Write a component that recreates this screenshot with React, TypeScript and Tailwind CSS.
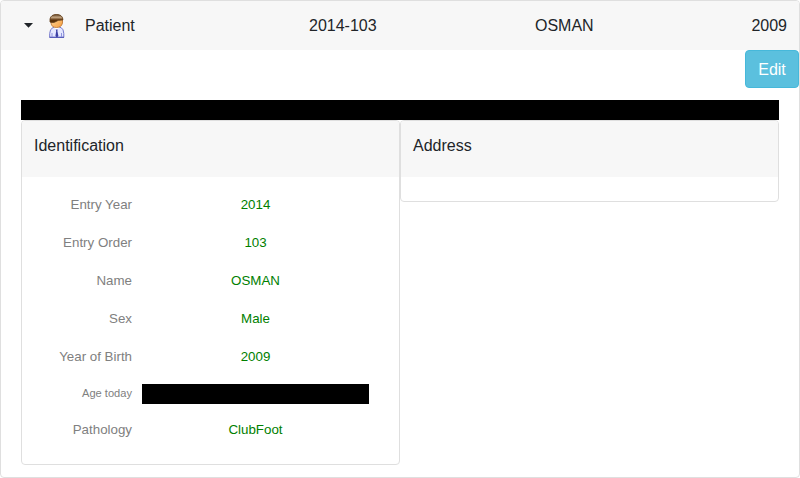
const rows: [string, string][] = [
  ['Entry Year', '2014'],
  ['Entry Order', '103'],
  ['Name', 'OSMAN'],
  ['Sex', 'Male'],
  ['Year of Birth', '2009'],
];

function Row({ label, value }: { label: string; value: string }) {
  return (
    <div className="flex h-[38px] items-center text-[13.33px]">
      <span className="w-[110px] text-right text-[#808080]">{label}</span>
      <span className="ml-[10px] w-[227px] text-center text-[#008000]">{value}</span>
    </div>
  );
}

function PatientIcon() {
  return (
    <svg width="16" height="24" viewBox="0 0 16 24">
      <defs>
        <linearGradient id="hair" x1="0" y1="0" x2="0" y2="1">
          <stop offset="0" stopColor="#5f4020" />
          <stop offset=".35" stopColor="#c4a684" />
          <stop offset=".7" stopColor="#5a3008" />
        </linearGradient>
        <linearGradient id="face" x1="0" y1="0" x2="1" y2="1">
          <stop offset="0" stopColor="#ffe0ac" />
          <stop offset="1" stopColor="#f59c3c" />
        </linearGradient>
      </defs>
      <path d="M.7 23.300V19.500Q.8 15 4 13.500H12Q14.600 15 14.800 19.500V23.300z" fill="#e5e8ff" stroke="#7377cc" />
      <path d="M.5 23.300h14.500" stroke="#4c50b4" />
      <path d="M3 23v-4M12.500 23v-4" stroke="#8f94de" />
      <path d="M4.500 13l3 3 3.500-3v-2H4.500z" fill="#fff" />
      <path d="M1.500 6Q2 1 7.500 1T13.500 6V9Q12.500 13.500 7.500 13.500T2 9z" fill="url(#face)" stroke="#b9702c" strokeWidth=".8" />
      <path d="M1 8V5Q1.800.5 7.500.5T13.800 5V6Q9 5.500 6 8Q4 9 1 8z" fill="url(#hair)" stroke="#5e3b18" strokeWidth=".8" />
      <path d="M6.700 15.500h2l-.3 1.500 1 5-1.500 1.500-1.500-1.500.8-5z" fill="#3c40a5" />
    </svg>
  );
}

export default function App() {
  return (
    <div className="h-[478px] w-[800px] overflow-hidden rounded-[4px] border border-[#dfdfdf] bg-white font-['Liberation_Sans',Arial,sans-serif] text-base text-[#212529]">
      <header className="flex h-[49px] items-center bg-[#f7f7f7]">
        <svg className="ml-[23px]" width="9" height="5" viewBox="0 0 9 5"><path d="M0 0h9L4.500 4.800z" fill="#212529" /></svg>
        <div className="ml-[16px]"><PatientIcon /></div>
        <span className="ml-[20px] w-[224px]">Patient</span>
        <span className="w-[226px]">2014-103</span>
        <span>OSMAN</span>
        <span className="ml-auto mr-3">2009</span>
      </header>
      <div className="flex justify-end">
        <button className="h-[38px] w-[54px] rounded-[4px] border border-[#46b8da] bg-[#5bc0de] pt-px text-white">Edit</button>
      </div>
      <main className="mx-5 mt-3">
        <div className="h-5 bg-black" />
        <div className="flex items-start">
          <section className="h-[345px] w-[379px] overflow-hidden rounded-[4px] border border-[#dfdfdf]">
            <h2 className="h-14 bg-[#f7f7f7] px-3 pt-[13px]">Identification</h2>
            <div className="pt-[9px]">
              {rows.map(([l, v]) => <Row key={l} label={l} value={v} />)}
              <div className="flex h-[35px] items-center">
                <span className="w-[110px] pb-[2px] text-right text-[11.11px] leading-4 text-[#808080]">Age today</span>
                <span className="ml-[10px] mt-px h-5 w-[227px] bg-black" />
              </div>
              <Row label="Pathology" value="ClubFoot" />
            </div>
          </section>
          <section className="h-[82px] w-[379px] overflow-hidden rounded-[4px] border border-[#dfdfdf]">
            <h2 className="h-14 bg-[#f7f7f7] px-3 pt-[13px]">Address</h2>
          </section>
        </div>
      </main>
    </div>
  );
}
